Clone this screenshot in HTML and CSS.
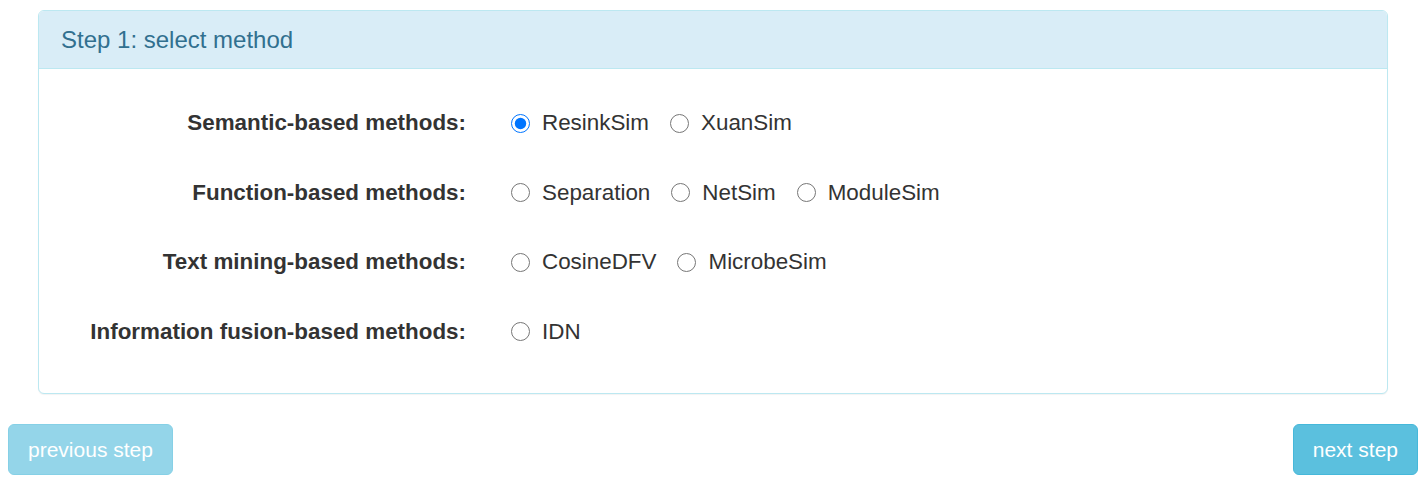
FILE: index.html
```html
<!DOCTYPE html>
<html>
<head>
<meta charset="utf-8">
<link rel="stylesheet" href="styles.css">
</head>
<body>
<div class="page">
  <div class="panel">
    <div class="panel-heading">Step 1: select method</div>
    <div class="panel-body">
      <div class="form-row">
        <div class="row-label">Semantic-based methods:</div>
        <div class="options">
          <label class="opt"><input type="radio" name="m" checked><span>ResinkSim</span></label>
          <label class="opt"><input type="radio" name="m"><span>XuanSim</span></label>
        </div>
      </div>
      <div class="form-row">
        <div class="row-label">Function-based methods:</div>
        <div class="options">
          <label class="opt"><input type="radio" name="m"><span>Separation</span></label>
          <label class="opt"><input type="radio" name="m"><span>NetSim</span></label>
          <label class="opt"><input type="radio" name="m"><span>ModuleSim</span></label>
        </div>
      </div>
      <div class="form-row">
        <div class="row-label">Text mining-based methods:</div>
        <div class="options">
          <label class="opt"><input type="radio" name="m"><span>CosineDFV</span></label>
          <label class="opt"><input type="radio" name="m"><span>MicrobeSim</span></label>
        </div>
      </div>
      <div class="form-row">
        <div class="row-label">Information fusion-based methods:</div>
        <div class="options">
          <label class="opt"><input type="radio" name="m"><span>IDN</span></label>
        </div>
      </div>
    </div>
  </div>
  <div class="actions">
    <button class="btn btn-disabled" disabled>previous step</button>
    <button class="btn">next step</button>
  </div>
</div>
</body>
</html>
```
FILE: styles.css
```css
html, body {
  margin: 0;
  padding: 0;
  background: #fff;
}
body {
  font-family: "Liberation Sans", Arial, Helvetica, sans-serif;
  color: #333;
  font-size: 22.4px;
  line-height: 32px;
}
.page {
  padding: 0 5px 0 8px;
}
.panel {
  margin: 10px 30px 30px 30px;
  border: 1px solid #bce8f1;
  border-radius: 6px;
  background: #fff;
  box-shadow: 0 1px 1px rgba(0,0,0,0.05);
}
.panel-heading {
  background: #d9edf7;
  color: #31708f;
  border-bottom: 1px solid #bce8f1;
  border-top-left-radius: 5px;
  border-top-right-radius: 5px;
  padding: 13px 22px 12px 22px;
  font-size: 24px;
  line-height: 32px;
}
.panel-body {
  padding: 38px 0 45px 0;
  display: flex;
  flex-direction: column;
  gap: 37.6px;
}
.form-row {
  display: grid;
  grid-template-columns: 427px 1fr;
  column-gap: 45px;
  align-items: center;
}
.row-label {
  text-align: right;
  font-weight: bold;
}
.options {
  display: flex;
  align-items: center;
  gap: 21px;
}
.opt {
  display: flex;
  align-items: center;
  gap: 12px;
}
.opt input {
  margin: 0;
  width: 19px;
  height: 19px;
}
.actions {
  display: flex;
  justify-content: space-between;
  align-items: flex-start;
}
.btn {
  font-family: "Liberation Sans", Arial, Helvetica, sans-serif;
  font-size: 21px;
  line-height: 29px;
  color: #fff;
  background: #5bc0de;
  border: 1px solid #46b8da;
  border-radius: 6px;
  padding: 10px 19px;
  height: 51px;
}
.btn-disabled {
  opacity: 0.65;
}
```
